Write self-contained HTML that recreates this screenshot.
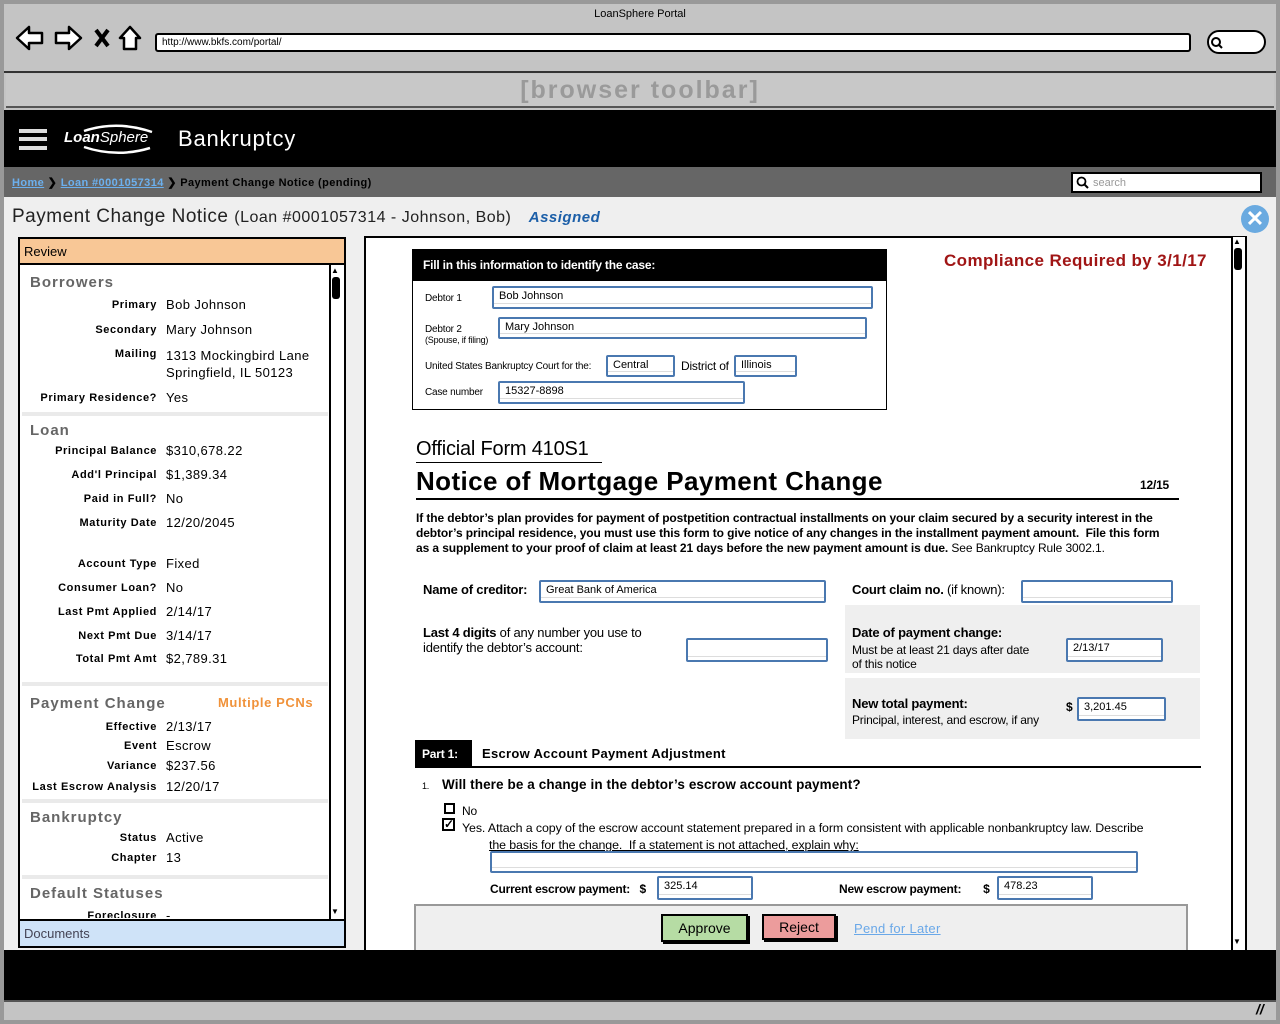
<!DOCTYPE html>
<html><head><meta charset="utf-8"><style>
*{margin:0;padding:0;box-sizing:border-box}
body{width:1280px;height:1024px;position:relative;overflow:hidden;background:#c4c4c4;font-family:"Liberation Sans",sans-serif;color:#000}
.a{position:absolute;white-space:nowrap}
.lbl{position:absolute;left:20px;width:137px;text-align:right;font-size:11px;font-weight:bold;letter-spacing:.6px}
.val{position:absolute;left:166px;font-size:13px;letter-spacing:.4px;white-space:nowrap}
.sec{position:absolute;left:30px;font-size:15px;color:#666;letter-spacing:1px;font-weight:bold}
.sep{position:absolute;left:22px;width:306px;height:4px;background:#eaeaea}
.f{font-family:"Liberation Sans",sans-serif;letter-spacing:-.2px}
.in{position:absolute;border:2px solid #4a78b0;border-radius:2px;font-size:11px;padding:2px 5px;background:#fff;white-space:nowrap;box-shadow:inset 0 -3px 0 #fff, inset 0 -4px 0 #ddd}
</style></head><body>
<div class="a" style="left:0;top:0;width:1280px;height:4px;background:#999"></div>
<div class="a" style="left:0;top:0;width:4px;height:1024px;background:#999"></div>
<div class="a" style="left:1276px;top:0;width:4px;height:1024px;background:#999"></div>
<div class="a" style="left:0;top:8px;width:1280px;text-align:center;font-size:11px">LoanSphere Portal</div>
<svg class="a" style="left:14px;top:24px" width="135" height="30" viewBox="0 0 135 30" fill="#fff" stroke="#000" stroke-width="2.5" stroke-linejoin="round">
<path d="M3 14 L15 3 L15 9 L28 9 L28 19 L15 19 L15 25 Z"/>
<path d="M67 14 L55 3 L55 9 L42 9 L42 19 L55 19 L55 25 Z"/>
<path d="M82 6 L94 22 M94 6 L82 22" stroke-width="4" fill="none"/>
<path d="M116 3 L106 14 L110 14 L110 25 L122 25 L122 14 L126 14 Z"/>
</svg>
<div class="a" style="left:155px;top:33px;width:1036px;height:19px;background:#fff;border:2px solid #000;border-radius:3px;font-size:10px;padding:2px 5px">http://www.bkfs.com/portal/</div>
<div class="a" style="left:1207px;top:30px;width:59px;height:24px;background:#fff;border:2px solid #000;border-radius:12px"></div>
<svg class="a" style="left:1210px;top:36px" width="14" height="14"><circle cx="6" cy="6" r="4" fill="none" stroke="#000" stroke-width="2"/><path d="M9 9 L12 12" stroke="#000" stroke-width="2"/></svg>
<div class="a" style="left:4px;top:71px;width:1272px;height:2px;background:#333"></div>
<div class="a" style="left:6px;top:74px;width:1268px;height:34px;background:#c8c8c8;border-bottom:2px solid #555;text-align:center;font-size:25px;color:#9a9a9a;font-weight:bold;letter-spacing:2px;line-height:32px">[browser toolbar]</div>
<div class="a" style="left:4px;top:110px;width:1272px;height:57px;background:#000"></div>
<div class="a" style="left:19px;top:129px;width:28px;height:4px;background:#ddd"></div>
<div class="a" style="left:19px;top:137px;width:28px;height:4px;background:#ddd"></div>
<div class="a" style="left:19px;top:146px;width:28px;height:4px;background:#ddd"></div>
<svg class="a" style="left:62px;top:122px" width="100" height="36"><path d="M22 9 Q55 -2 90 10" stroke="#fff" stroke-width="2.5" fill="none"/><path d="M22 25 Q55 36 88 26" stroke="#fff" stroke-width="2.5" fill="none"/></svg>
<div class="a" style="left:64px;top:129px;color:#fff;font-size:15px;font-style:italic"><b>Loan</b>Sphere</div>
<div class="a" style="left:178px;top:126px;color:#fff;font-size:22px;letter-spacing:.8px">Bankruptcy</div>
<div class="a" style="left:4px;top:167px;width:1272px;height:30px;background:#666"></div>
<div class="a" style="left:12px;top:176px;font-size:11px;font-weight:bold;color:#000;letter-spacing:.4px"><span style="color:#6cb0ee;text-decoration:underline">Home</span> ❯ <span style="color:#6cb0ee;text-decoration:underline">Loan #0001057314</span> ❯ Payment Change Notice (pending)</div>
<div class="a" style="left:1071px;top:172px;width:191px;height:21px;background:#fff;border:2px solid #000;font-size:11px;color:#999;padding:3px 0 0 20px">search</div>
<svg class="a" style="left:1076px;top:176px" width="14" height="14"><circle cx="5.5" cy="5.5" r="4" fill="none" stroke="#000" stroke-width="1.8"/><path d="M8.5 8.5 L12 12" stroke="#000" stroke-width="2"/></svg>
<div class="a" style="left:4px;top:197px;width:1272px;height:753px;background:#efefef"></div>
<div class="a" style="left:12px;top:206px;font-size:19px;color:#222;letter-spacing:.5px">Payment Change Notice <span style="font-size:16px">(Loan #0001057314 - Johnson, Bob)</span> &nbsp; <span style="font-size:15px;color:#1c5fa8;font-style:italic;font-weight:bold">Assigned</span></div>
<div class="a" style="left:1241px;top:205px;width:28px;height:28px;border-radius:14px;background:#6aaae0;color:#fff;font-size:22px;font-weight:bold;text-align:center;line-height:28px">✕</div>
<div class="a" style="left:18px;top:237px;width:328px;height:711px;border:2px solid #000;background:#fff"></div>
<div class="a" style="left:18px;top:237px;width:328px;height:28px;background:#f8c796;border:2px solid #000;font-size:13px;padding:5px 4px">Review</div>
<div class="a" style="left:329px;top:265px;width:15px;height:654px;background:#fff;border-left:2px solid #000"></div>
<div class="a" style="left:332px;top:277px;width:8px;height:22px;background:#000;border-radius:3px"></div>
<div class="a" style="left:331px;top:266px;font-size:8px">▲</div>
<div class="a" style="left:331px;top:907px;font-size:8px">▼</div>
<div class="sep" style="top:412px"></div>
<div class="sep" style="top:682px"></div>
<div class="sep" style="top:799px"></div>
<div class="sep" style="top:875px"></div>
<div class="sec" style="top:274px">Borrowers</div>
<div class="lbl" style="top:299px">Primary</div><div class="val" style="top:297px">Bob Johnson</div>
<div class="lbl" style="top:324px">Secondary</div><div class="val" style="top:322px">Mary Johnson</div>
<div class="lbl" style="top:348px">Mailing</div><div class="val" style="top:347px;line-height:17px">1313 Mockingbird Lane<br>Springfield, IL 50123</div>
<div class="lbl" style="top:392px">Primary Residence?</div><div class="val" style="top:390px">Yes</div>
<div class="sec" style="top:422px">Loan</div>
<div class="lbl" style="top:445px">Principal Balance</div><div class="val" style="top:443px">$310,678.22</div>
<div class="lbl" style="top:469px">Add'l Principal</div><div class="val" style="top:467px">$1,389.34</div>
<div class="lbl" style="top:493px">Paid in Full?</div><div class="val" style="top:491px">No</div>
<div class="lbl" style="top:517px">Maturity Date</div><div class="val" style="top:515px">12/20/2045</div>
<div class="lbl" style="top:558px">Account Type</div><div class="val" style="top:556px">Fixed</div>
<div class="lbl" style="top:582px">Consumer Loan?</div><div class="val" style="top:580px">No</div>
<div class="lbl" style="top:606px">Last Pmt Applied</div><div class="val" style="top:604px">2/14/17</div>
<div class="lbl" style="top:630px">Next Pmt Due</div><div class="val" style="top:628px">3/14/17</div>
<div class="lbl" style="top:653px">Total Pmt Amt</div><div class="val" style="top:651px">$2,789.31</div>
<div class="sec" style="top:695px">Payment Change</div>
<div class="a" style="left:218px;top:695px;font-size:13px;font-weight:bold;color:#f0923a;letter-spacing:.6px">Multiple PCNs</div>
<div class="lbl" style="top:721px">Effective</div><div class="val" style="top:719px">2/13/17</div>
<div class="lbl" style="top:740px">Event</div><div class="val" style="top:738px">Escrow</div>
<div class="lbl" style="top:760px">Variance</div><div class="val" style="top:758px">$237.56</div>
<div class="lbl" style="top:781px">Last Escrow Analysis</div><div class="val" style="top:779px">12/20/17</div>
<div class="sec" style="top:809px">Bankruptcy</div>
<div class="lbl" style="top:832px">Status</div><div class="val" style="top:830px">Active</div>
<div class="lbl" style="top:852px">Chapter</div><div class="val" style="top:850px">13</div>
<div class="sec" style="top:885px">Default Statuses</div>
<div style="position:absolute;left:20px;top:905px;width:309px;height:13px;overflow:hidden"><div class="lbl" style="left:0;top:5px">Foreclosure</div><div class="val" style="left:146px;top:3px">-</div></div>
<div class="a" style="left:18px;top:919px;width:328px;height:29px;background:#cfe3f8;border:2px solid #000;font-size:13px;color:#445;padding:5px 4px">Documents</div>
<div class="a" style="left:364px;top:236px;width:883px;height:714px;background:#fff;border:2px solid #000;border-bottom:none"></div>
<div class="a" style="left:1231px;top:237px;width:14px;height:713px;border-left:2px solid #000;background:#fff"></div>
<div class="a" style="left:1234px;top:248px;width:8px;height:22px;background:#000;border-radius:3px"></div>
<div class="a" style="left:1233px;top:237px;font-size:8px">▲</div>
<div class="a" style="left:1233px;top:937px;font-size:8px">▼</div>
<div class="a" style="left:944px;top:251px;font-size:17px;font-weight:bold;color:#a01515;letter-spacing:.4px">Compliance Required by 3/1/17</div>
<div class="a" style="left:412px;top:249px;width:475px;height:161px;border:1px solid #000"></div>
<div class="a f" style="left:412px;top:249px;width:475px;height:32px;background:#000;color:#fff;font-size:12px;font-weight:bold;padding:9px 11px">Fill in this information to identify the case:</div>
<div class="a f" style="left:425px;top:293px;font-size:10px">Debtor 1</div>
<div class="in" style="left:492px;top:286px;width:381px;height:23px">Bob Johnson</div>
<div class="a f" style="left:425px;top:324px;font-size:10px;line-height:11px">Debtor 2<br><span style="font-size:9px">(Spouse, if filing)</span></div>
<div class="in" style="left:498px;top:317px;width:369px;height:22px">Mary Johnson</div>
<div class="a f" style="left:425px;top:361px;font-size:10px">United States Bankruptcy Court for the:</div>
<div class="in" style="left:606px;top:355px;width:69px;height:22px">Central</div>
<div class="a f" style="left:681px;top:359px;font-size:12px">District of</div>
<div class="in" style="left:734px;top:355px;width:63px;height:22px">Illinois</div>
<div class="a f" style="left:425px;top:387px;font-size:10px">Case number</div>
<div class="in" style="left:498px;top:381px;width:247px;height:23px">15327-8898</div>
<div class="a f" style="left:416px;top:438px;font-size:20px">Official Form 410S1</div>
<div class="a" style="left:416px;top:462px;width:186px;height:1px;background:#000"></div>
<div class="a f" style="left:416px;top:466px;font-size:26px;font-weight:bold;letter-spacing:.4px">Notice of Mortgage Payment Change</div>
<div class="a f" style="left:1140px;top:478px;font-size:12px;font-weight:bold">12/15</div>
<div class="a" style="left:416px;top:498px;width:763px;height:2px;background:#000"></div>
<div class="a f" style="left:416px;top:511px;font-size:12px;font-weight:bold;line-height:15px;letter-spacing:-.1px">If the debtor’s plan provides for payment of postpetition contractual installments on your claim secured by a security interest in the<br>debtor’s principal residence, you must use this form to give notice of any changes in the installment payment amount.&nbsp; File this form<br>as a supplement to your proof of claim at least 21 days before the new payment amount is due. <span style="font-weight:normal">See Bankruptcy Rule 3002.1.</span></div>
<div class="a f" style="left:423px;top:582px;font-size:13px"><b>Name of creditor:</b></div>
<div class="in" style="left:539px;top:580px;width:287px;height:23px">Great Bank of America</div>
<div class="a f" style="left:852px;top:582px;font-size:13px"><b>Court claim no.</b> (if known):</div>
<div class="in" style="left:1021px;top:580px;width:152px;height:23px"></div>
<div class="a f" style="left:423px;top:625px;font-size:13px;line-height:15px"><b>Last 4 digits</b> of any number you use to<br>identify the debtor’s account:</div>
<div class="in" style="left:686px;top:638px;width:142px;height:24px"></div>
<div class="a" style="left:845px;top:605px;width:355px;height:68px;background:#efefef"></div>
<div class="a" style="left:845px;top:678px;width:355px;height:61px;background:#efefef"></div>
<div class="a f" style="left:852px;top:625px;font-size:13px;font-weight:bold">Date of payment change:</div>
<div class="a f" style="left:852px;top:643px;font-size:12px;line-height:14px">Must be at least 21 days after date<br>of this notice</div>
<div class="in" style="left:1066px;top:638px;width:97px;height:24px">2/13/17</div>
<div class="a f" style="left:852px;top:696px;font-size:13px;font-weight:bold">New total payment:</div>
<div class="a f" style="left:852px;top:713px;font-size:12px">Principal, interest, and escrow, if any</div>
<div class="a f" style="left:1066px;top:700px;font-size:12px;font-weight:bold">$</div>
<div class="in" style="left:1077px;top:697px;width:89px;height:24px">3,201.45</div>
<div class="a f" style="left:415px;top:740px;width:57px;height:28px;background:#000;color:#fff;font-size:12px;font-weight:bold;padding:7px 7px">Part 1:</div>
<div class="a f" style="left:482px;top:746px;font-size:13px;font-weight:bold;letter-spacing:.3px">Escrow Account Payment Adjustment</div>
<div class="a" style="left:415px;top:766px;width:786px;height:2px;background:#000"></div>
<div class="a f" style="left:422px;top:781px;font-size:9px">1.</div>
<div class="a f" style="left:442px;top:777px;font-size:13.5px;font-weight:bold;letter-spacing:.1px">Will there be a change in the debtor’s escrow account payment?</div>
<div class="a" style="left:444px;top:803px;width:11px;height:11px;border:2px solid #000"></div>
<div class="a f" style="left:462px;top:804px;font-size:12px">No</div>
<div class="a" style="left:442px;top:818px;width:13px;height:13px;border:2px solid #000;font-size:12px;line-height:9px;font-weight:bold">✓</div>
<div class="a f" style="left:462px;top:820px;font-size:12.4px;line-height:17px;letter-spacing:-.1px">Yes. Attach a copy of the escrow account statement prepared in a form consistent with applicable nonbankruptcy law. Describe<br><span style="padding-left:27px;text-decoration:underline">the basis for the change.&nbsp; If a statement is not attached, explain why:</span></div>
<div class="in" style="left:490px;top:851px;width:648px;height:22px"></div>
<div class="a f" style="left:490px;top:882px;font-size:12px;font-weight:bold">Current escrow payment:&nbsp;&nbsp; $</div>
<div class="in" style="left:657px;top:876px;width:96px;height:24px">325.14</div>
<div class="a f" style="left:839px;top:882px;font-size:12px;font-weight:bold">New escrow payment:&nbsp;&nbsp;&nbsp;&nbsp;&nbsp;&nbsp; $</div>
<div class="in" style="left:997px;top:876px;width:96px;height:24px">478.23</div>
<div class="a" style="left:414px;top:904px;width:774px;height:46px;background:#efefef;border:2px solid #999;border-bottom:none"></div>
<div class="a" style="left:661px;top:914px;width:87px;height:28px;background:#b6dca4;border:2px solid #000;box-shadow:2px 2px 0 #000;font-size:14px;text-align:center;line-height:24px">Approve</div>
<div class="a" style="left:762px;top:914px;width:74px;height:26px;background:#ec9c9c;border:2px solid #000;box-shadow:2px 2px 0 #000;font-size:14px;text-align:center;line-height:22px">Reject</div>
<div class="a" style="left:854px;top:921px;font-size:13px;color:#6aa8e8;text-decoration:underline;letter-spacing:.3px">Pend for Later</div>
<div class="a" style="left:4px;top:950px;width:1272px;height:50px;background:#000"></div>
<div class="a" style="left:4px;top:1000px;width:1272px;height:20px;background:#c4c4c4;border-top:2px solid #555"></div>
<div class="a" style="left:1256px;top:1001px;font-size:14px;font-weight:bold;font-style:italic">//</div>
<div class="a" style="left:0;top:1020px;width:1280px;height:4px;background:#999"></div>
</body></html>
